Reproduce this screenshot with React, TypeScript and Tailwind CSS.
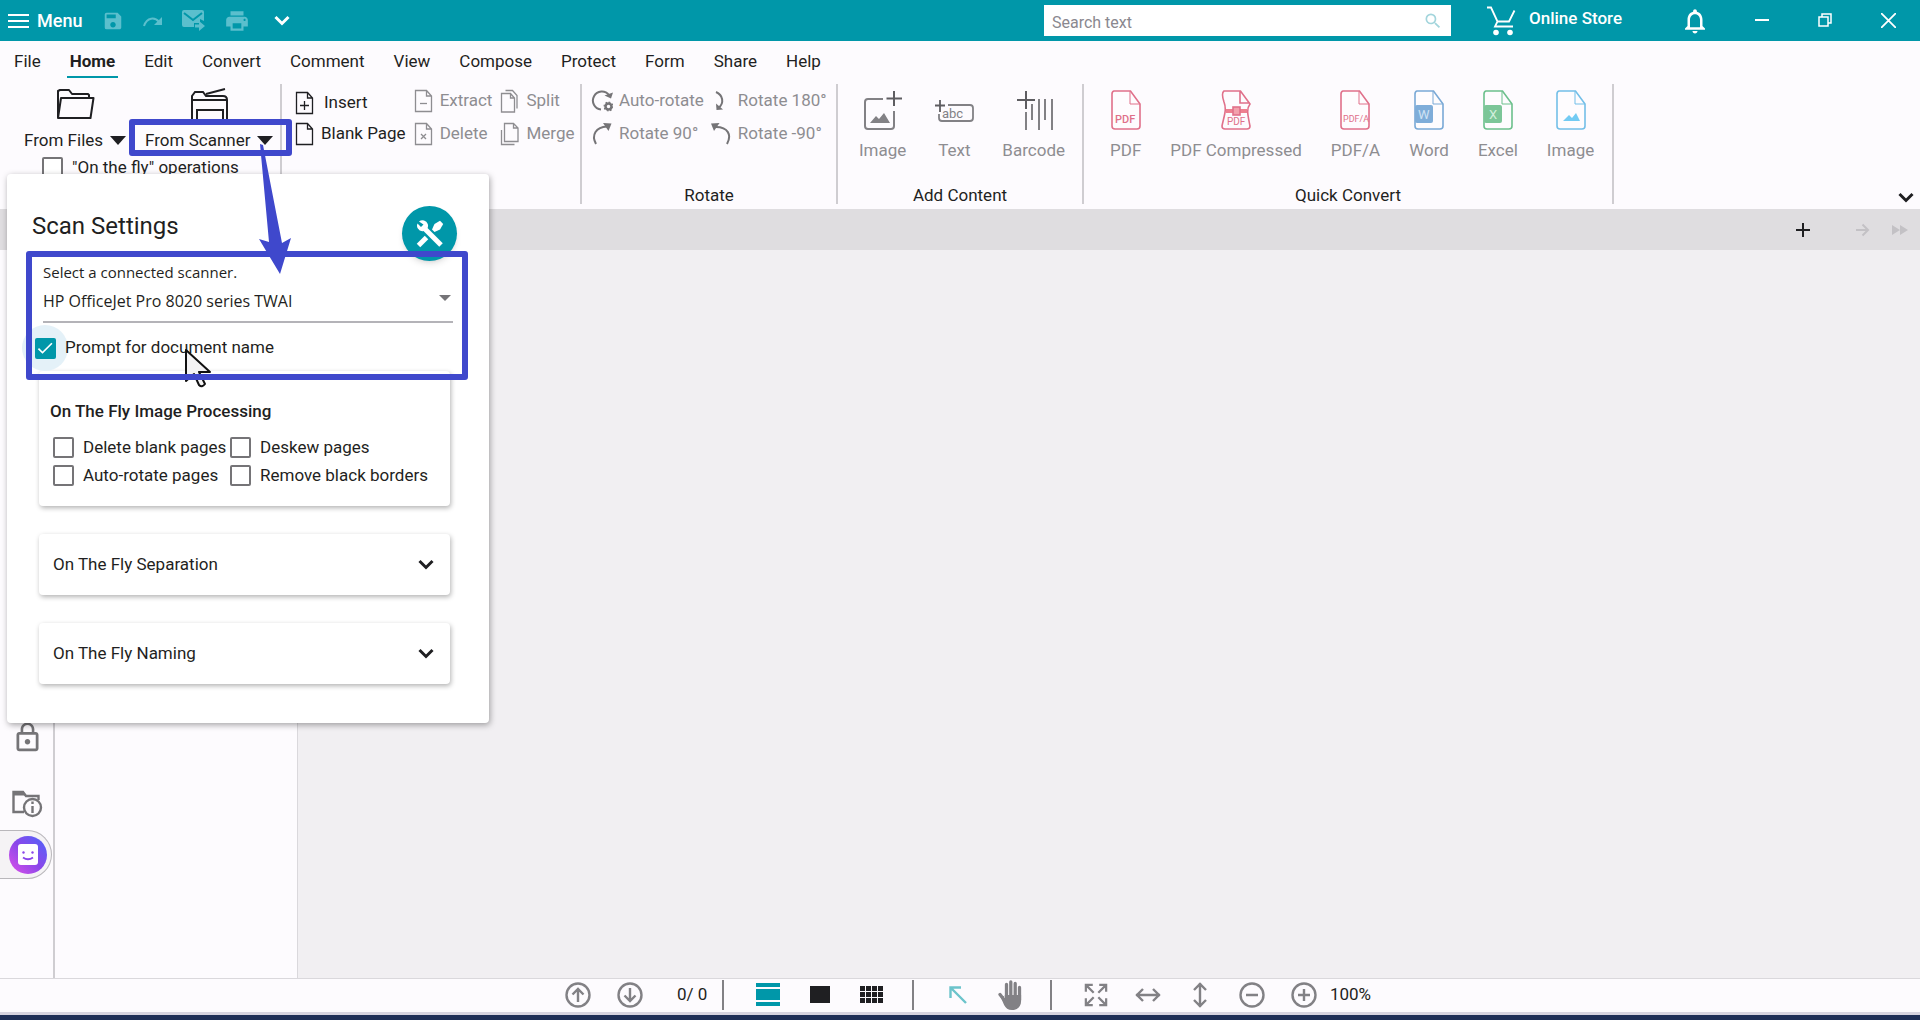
import type { ReactNode } from "react"
import { MdCheck, MdLockOutline, MdNotificationsNone, MdPrint, MdSave, MdSearch } from "react-icons/md"

const menuTabs = ["File", "Home", "Edit", "Convert", "Comment", "View", "Compose", "Protect", "Form", "Share", "Help"]

function Caret() {
  return (
    <svg width="16" height="9" viewBox="0 0 16 9" fill="#1f1f22">
      <path d="M0 0h16L8 9z" />
    </svg>
  )
}

function Chevron() {
  return (
    <svg width="16" height="11" viewBox="0 0 16 11" fill="none" stroke="currentColor" strokeWidth="3">
      <path d="M1.5 2 8 8.500 14.500 2" />
    </svg>
  )
}

function PageIcon({ kind }: { kind: "insert" | "blank" | "extract" | "delete" | "split" | "merge" }) {
  return (
    <svg width="20" height="24" viewBox="0 0 20 24" fill="none" stroke="currentColor" strokeWidth="1.3">
      {kind === "split" ? (
        <path d="M1.500 4.500h9l4 4.500v14h-13zM10.500 4.500v4.500h4M5.500 1.500h7l4.500 5v13" />
      ) : kind === "merge" ? (
        <path d="M4.500 1.500h9l4.500 4.500v13.500h-13.500zM13.500 1.500v4.500h4.500M1.500 8v14.500h13" />
      ) : (
        <path d="M1.500 1.500h11l5 5.500v15.500h-16zM12.500 1.500v5.500h5" />
      )}
      {kind === "insert" && <path d="M9.500 10v9M5 14.500h9" />}
      {kind === "extract" && <path d="M6 14.500h7" />}
      {kind === "delete" && <path d="m7 12 5 5m0-5-5 5" />}
    </svg>
  )
}

function RotateIcon({ kind }: { kind: "auto" | "cw" | "half" | "ccw" }) {
  return (
    <svg width="22" height="24" viewBox="0 0 22 24" fill="none" stroke="#757477" strokeWidth="2">
      {kind === "auto" && (
        <>
          <path d="M10 20.500A9 9 0 1 1 18 6" />
          <path d="M13.500 6.500 20 9.500l2-6z" fill="#757477" stroke="none" />
          <circle cx="17.500" cy="17.500" r="3" strokeWidth="2.500" />
          <circle cx="17.500" cy="17.500" r="4.400" strokeWidth="1.200" strokeDasharray="1.700 1.700" />
        </>
      )}
      {kind === "cw" && (
        <>
          <path d="M5 22C0 13 5 5 16 4.500" />
          <path d="m12 1 8.500.500L17.500 9z" fill="#757477" stroke="none" />
        </>
      )}
      {kind === "half" && (
        <>
          <path d="M6 3c7 3 8.500 11 2.500 16" />
          <path d="m6 14.500.5 6.500 6.500-.5z" fill="#757477" stroke="none" />
        </>
      )}
      {kind === "ccw" && (
        <>
          <path d="M17 22C22 13 18 5 6 5" />
          <path d="M9.500 1 1 1.500 4 9z" fill="#757477" stroke="none" />
        </>
      )}
    </svg>
  )
}

function RibbonItem({ icon, label, active = false, className = "gap-[6px]" }: { icon: ReactNode; label: string; active?: boolean; className?: string }) {
  return (
    <button className={`flex h-6 items-center whitespace-nowrap ${className} ${active ? "text-[#1f1f22]" : "text-[#8e8d91]"}`}>
      {icon}
      {label}
    </button>
  )
}

function RibbonGroup({ title, className, children }: { title?: string; className: string; children: ReactNode }) {
  return (
    <section className={`flex h-[120px] flex-none flex-col justify-between border-r-2 border-[#cfcdd1] ${className}`}>
      {children}
      {title && <h2 className="text-center leading-[18px] text-[#1f1f22]">{title}</h2>}
    </section>
  )
}

function TallItem({ label, children }: { label: string; children: ReactNode }) {
  return (
    <button className="flex flex-col items-center gap-[10px] whitespace-nowrap leading-5 text-[#8e8d91]">
      {children}
      {label}
    </button>
  )
}

function FileIcon({ color, children }: { color: string; children: ReactNode }) {
  return (
    <svg width="30" height="40" viewBox="0 0 30 40" fill="none" stroke={color} strokeWidth="1.600">
      <path d="M3 1h16.500L29 14v22a3 3 0 0 1-3 3H4a3 3 0 0 1-3-3V4a3 3 0 0 1 2-3z" fill="#fefcfe" />
      <path d="M19 1v13h10" strokeWidth="1" />
      {children}
    </svg>
  )
}

function Check({ id, label }: { id: string; label: string }) {
  return (
    <div className="flex items-center gap-[9px] whitespace-nowrap">
      <input
        id={id}
        type="checkbox"
        className="size-[21px] flex-none appearance-none rounded-[2px] border-2 border-[#757477] bg-white checked:border-[#0097a9] checked:bg-[#0097a9]"
      />
      <label htmlFor={id}>{label}</label>
    </div>
  )
}

function TitleBar() {
  return (
    <header className="flex h-[41px] flex-none items-center bg-[#0097a9] pl-2 text-white">
      <button className="flex items-center gap-2 text-lg font-medium">
        <svg width="21" height="16" viewBox="0 0 21 16" fill="none" stroke="currentColor" strokeWidth="2">
          <path d="M0 2h21M0 8h21M0 14h21" />
        </svg>
        Menu
      </button>
      <div className="ml-5 flex items-center gap-[19px] text-[#5bbfcd]">
        <button aria-label="Save">
          <MdSave size={22} />
        </button>
        <button aria-label="Redo">
          <svg width="20" height="12" viewBox="0 0 20 12" fill="none" stroke="currentColor" strokeWidth="2">
            <path d="M1 11c3-9 11-9 15-4" />
            <path d="M19 2v8h-8z" fill="currentColor" stroke="none" />
          </svg>
        </button>
        <button aria-label="Send by mail">
          <svg width="23" height="21" viewBox="0 0 23 21" fill="currentColor">
            <path d="M2 0h18a2 2 0 0 1 2 2v9l-4-2v4h-6v4H2a2 2 0 0 1-2-2V2a2 2 0 0 1 2-2z" />
            <path d="M13 14.500h4v-3.500l6 5-6 5v-3.500h-4z" />
            <path d="m2 3 9 7 9-7" fill="none" stroke="#0097a9" strokeWidth="2" />
          </svg>
        </button>
        <button aria-label="Print">
          <MdPrint size={26} />
        </button>
      </div>
      <button aria-label="More commands" className="ml-6">
        <Chevron />
      </button>
      <div className="ml-auto flex h-[31px] w-[407px] items-center bg-white px-2">
        <input
          type="text"
          aria-label="Search text"
          placeholder="Search text"
          className="min-w-0 flex-1 pt-1 text-base text-[#1f1f22] outline-none placeholder:text-[#8a888f]"
        />
        <MdSearch size={20} className="text-[#a3d5dc]" />
      </div>
      <a href="#store" className="ml-9 flex items-center gap-[13px] text-[17px] font-medium">
        <svg width="29" height="30" viewBox="0 0 29 30" fill="none" stroke="currentColor" strokeWidth="1.800">
          <path d="M0 1.500h4l6.500 14L8 20.500h18M10 15.500h12l5.500-11" />
          <circle cx="9" cy="26.500" r="2.800" fill="currentColor" stroke="none" />
          <circle cx="23" cy="26.500" r="2.800" fill="currentColor" stroke="none" />
        </svg>
        <span className="pb-1">Online Store</span>
      </a>
      <button aria-label="Notifications" className="ml-[58px]">
        <MdNotificationsNone size={30} />
      </button>
      <div className="ml-[33px] flex">
        <button aria-label="Minimize" className="flex w-[63px] pl-3">
          <svg width="14" height="14" stroke="currentColor" strokeWidth="2">
            <path d="M0 7h14" />
          </svg>
        </button>
        <button aria-label="Restore" className="flex w-[63px] pl-3">
          <svg width="14" height="14" fill="none" stroke="currentColor" strokeWidth="1.500">
            <path d="M1 4h9v9H1zM4 4V1h9v9h-3" />
          </svg>
        </button>
        <button aria-label="Close" className="flex w-[51px] pl-3">
          <svg width="15" height="15" stroke="currentColor" strokeWidth="1.800">
            <path d="m0 0 15 15M15 0 0 15" />
          </svg>
        </button>
      </div>
    </header>
  )
}

function MenuTabs() {
  return (
    <nav className="flex flex-none gap-[23px] px-[11px] pt-[6px]">
      {menuTabs.map((tab) => (
        <a
          key={tab}
          href={`#${tab.toLowerCase()}`}
          className={`border-b-2 px-[3px] pt-1 pb-[5px] leading-5 ${tab === "Home" ? "border-[#0097a9] font-bold" : "border-transparent"}`}
        >
          {tab}
        </a>
      ))}
    </nav>
  )
}

function Ribbon() {
  return (
    <div className="flex flex-none pt-[6px] pb-[5px]">
      <RibbonGroup className="w-[282px]">
        <div className="pt-1 pl-6">
          <div className="flex gap-[19px]">
            <button className="flex flex-col items-center gap-2 leading-6">
              <svg width="39" height="32" viewBox="0 0 39 32" fill="none" stroke="#1f1f22" strokeWidth="2" strokeLinejoin="round">
                <path d="M2 30V3l2-1h9l3 4h16l1 1v3" />
                <path d="M5 10h32.500l-3 20H2z" />
              </svg>
              <span className="flex items-center gap-[7px]">
                From Files <Caret />
              </span>
            </button>
            <button className="flex flex-col items-center gap-2 leading-6">
              <svg width="39" height="32" viewBox="0 0 39 32" fill="none" stroke="#1f1f22" strokeWidth="2">
                <path d="M2 32V8l3-4h8l3 4h17c3 0 4 2 4 4v20M2 12h35M7 32V22h26v10M16 6 35 1" />
              </svg>
              <span className="flex items-center gap-[7px]">
                From Scanner <Caret />
              </span>
            </button>
          </div>
          <div className="pt-[3px] pl-[18px] leading-6">
            <Check id="fly" label={'"On the fly" operations'} />
          </div>
        </div>
      </RibbonGroup>
      <RibbonGroup className="w-[300px]">
        <div className="flex items-end gap-2 pt-[5px] pl-[13px]">
          <div className="grid gap-[7px]">
            <RibbonItem active className="gap-[9px]" icon={<PageIcon kind="insert" />} label="Insert" />
            <RibbonItem active icon={<PageIcon kind="blank" />} label="Blank Page" />
          </div>
          <div className="grid gap-[9px]">
            <RibbonItem icon={<PageIcon kind="extract" />} label="Extract" />
            <RibbonItem icon={<PageIcon kind="delete" />} label="Delete" />
          </div>
          <div className="grid gap-[9px]">
            <RibbonItem icon={<PageIcon kind="split" />} label="Split" />
            <RibbonItem icon={<PageIcon kind="merge" />} label="Merge" />
          </div>
        </div>
      </RibbonGroup>
      <RibbonGroup title="Rotate" className="w-[256px]">
        <div className="flex gap-[6px] pt-[5px] pl-[9px]">
          <div className="grid gap-[9px]">
            <RibbonItem icon={<RotateIcon kind="auto" />} label="Auto-rotate" />
            <RibbonItem icon={<RotateIcon kind="cw" />} label="Rotate 90°" />
          </div>
          <div className="grid gap-[9px]">
            <RibbonItem icon={<RotateIcon kind="half" />} label="Rotate 180°" />
            <RibbonItem icon={<RotateIcon kind="ccw" />} label="Rotate -90°" />
          </div>
        </div>
      </RibbonGroup>
      <RibbonGroup title="Add Content" className="w-[246px]">
        <div className="flex gap-7 pt-[6px] pl-[21px]">
          <TallItem label="Image">
            <svg width="40" height="40" viewBox="0 0 40 40" fill="none" stroke="#828185" strokeWidth="2">
              <path d="M20 9H5a3 3 0 0 0-3 3v24a3 3 0 0 0 3 3h23a3 3 0 0 0 3-3V21" />
              <path d="M31 1v15M23.500 8.500H39" stroke="#5e5d61" />
              <path d="m7 33 6-7 3 3 5-6 6 10z" fill="#828185" stroke="none" />
            </svg>
          </TallItem>
          <TallItem label="Text">
            <svg width="40" height="40" viewBox="0 0 40 40" fill="none" stroke="#828185" strokeWidth="1.800">
              <path d="M14 15h22a3 3 0 0 1 3 3v10a3 3 0 0 1-3 3H8a3 3 0 0 1-3-3v-4" />
              <path d="M6 10v12M1 15.500h10" stroke="#5e5d61" />
              <text x="8" y="28" fill="#828185" stroke="none" fontSize="13">
                abc
              </text>
            </svg>
          </TallItem>
          <TallItem label="Barcode">
            <svg width="40" height="40" viewBox="0 0 40 40" fill="none" stroke="#828185" strokeWidth="2">
              <path d="M12 22v18M18 14v16M25 9v31M31 9v21M38 9v31" />
              <path d="M12 1v18M3 10h18" stroke="#5e5d61" />
            </svg>
          </TallItem>
        </div>
      </RibbonGroup>
      <RibbonGroup title="Quick Convert" className="w-[530px]">
        <div className="flex gap-[29px] pt-[6px] pl-[26px]">
          <TallItem label="PDF">
            <FileIcon color="#e0708a">
              <text x="4" y="33" fill="#e0708a" stroke="none" fontSize="11" fontWeight="500">
                PDF
              </text>
            </FileIcon>
          </TallItem>
          <TallItem label="PDF Compressed">
            <svg width="30" height="40" viewBox="0 0 30 40" fill="none" stroke="#e0708a" strokeWidth="1.600">
              <path d="M3 1h16.500L29 14c-4 5-2 12 0 22 0 2-1 3-3 3H4c-2 0-3-1-3-3 2-10 5-16 2-24C2 9 0 3 3 1zM19 1v12h10" />
              <path d="M5 21h21" stroke="#ee8090" strokeWidth="4" />
              <rect x="12" y="17" width="7" height="8" fill="#f2a0ac" />
              <text x="6" y="35" fill="#e0708a" stroke="none" fontSize="10">
                PDF
              </text>
            </svg>
          </TallItem>
          <TallItem label="PDF/A">
            <FileIcon color="#e0708a">
              <text x="3" y="32" fill="#e0708a" stroke="none" fontSize="9">
                PDF/A
              </text>
            </FileIcon>
          </TallItem>
          <TallItem label="Word">
            <FileIcon color="#7aa9d6">
              <rect x="1" y="15" width="18" height="18" rx="2" fill="#7fadd9" stroke="none" />
              <text x="4" y="29" fill="#cfe2f4" stroke="none" fontSize="13">
                W
              </text>
            </FileIcon>
          </TallItem>
          <TallItem label="Excel">
            <FileIcon color="#6cc08c">
              <rect x="1" y="15" width="18" height="18" rx="2" fill="#7cc698" stroke="none" />
              <text x="6" y="29" fill="#d3f0dd" stroke="none" fontSize="13">
                X
              </text>
            </FileIcon>
          </TallItem>
          <TallItem label="Image">
            <FileIcon color="#73bfe8">
              <path d="m7 31 6-6 3 3 4-5 4 8z" fill="#73cbf3" stroke="none" />
            </FileIcon>
          </TallItem>
        </div>
      </RibbonGroup>
      <button aria-label="Collapse ribbon" className="mt-auto mr-[6px] mb-px ml-auto">
        <Chevron />
      </button>
    </div>
  )
}

function DocumentTabs() {
  return (
    <div className="flex h-[41px] flex-none items-center justify-end bg-[#dfdde0] pr-3 text-[#c3c1c5]">
      <button aria-label="New tab">
        <svg width="14" height="14" stroke="#1f1f22" strokeWidth="2">
          <path d="M7 0v14M0 7h14" />
        </svg>
      </button>
      <button aria-label="Next tab" className="ml-[46px]">
        <svg width="14" height="14" fill="none" stroke="currentColor" strokeWidth="2">
          <path d="M0 7h12M6.500 1.500 12 7l-5.500 5.500" />
        </svg>
      </button>
      <button aria-label="Last tab" className="ml-[22px]">
        <svg width="16" height="12" fill="currentColor">
          <path d="m0 1 8 5-8 5zM8 1l8 5-8 5z" />
        </svg>
      </button>
    </div>
  )
}

function SideBar() {
  return (
    <aside className="flex w-[55px] flex-none flex-col justify-end border-r-2 border-[#cfcdd1] pb-[99px] text-[#757477]">
      <button aria-label="Security" className="mb-9 ml-[11px] self-start">
        <MdLockOutline size={33} />
      </button>
      <button aria-label="Document info" className="mb-3 ml-3 self-start">
        <svg width="31" height="28" viewBox="0 0 31 28" fill="none" stroke="currentColor" strokeWidth="2.400">
          <path d="M12 22H1.500V2H11l3 4h12.500v4" />
          <path d="M1.500 1.500H11l2.500 4h-12z" fill="currentColor" stroke="none" />
          <circle cx="20.500" cy="17.500" r="8.500" />
          <path d="M20.500 16v7M20.500 11.500v2.500" />
        </svg>
      </button>
      <button aria-label="Assistant" className="flex h-[49px] w-[52px] items-center rounded-r-full border border-l-0 border-[#b9b7bb] bg-[#f5f3f5] pl-[9px]">
        <span className="flex size-[38px] items-center justify-center rounded-full bg-linear-to-tr from-[#e04be8] via-[#8a46ea] to-[#4063fa]">
          <svg width="20" height="21" viewBox="0 0 20 21">
            <rect width="20" height="21" rx="3" fill="#fff" />
            <path d="M5 13.500q5 3.500 10 0" fill="none" stroke="#8a46ea" strokeWidth="1.800" />
            <circle cx="5.500" cy="8.500" r="1.200" fill="#8a46ea" />
            <circle cx="14.500" cy="8.500" r="1.200" fill="#8a46ea" />
          </svg>
        </span>
      </button>
    </aside>
  )
}

function ToolButton({ label, children }: { label: string; children: ReactNode }) {
  return (
    <button aria-label={label} className="flex w-[52px] justify-center">
      {children}
    </button>
  )
}

function StatusIcon({ d, size = 26 }: { d: string; size?: number }) {
  return (
    <svg width={size} height={size} viewBox="0 0 26 26" fill="none" stroke="currentColor" strokeWidth="2.400">
      <path d={d} />
    </svg>
  )
}

const ring = "M13 1.500a11.500 11.500 0 1 0 0 23a11.500 11.500 0 1 0 0-23z"

function StatusBar() {
  return (
    <footer className="flex-none border-t border-[#dad8dc]">
      <div className="flex h-[33px] items-center justify-center pb-[2px] pl-[3px] text-[#828185]">
        <ToolButton label="Previous page">
          <StatusIcon d={`${ring}M13 20V7M7.500 12.500 13 7l5.500 5.500`} />
        </ToolButton>
        <ToolButton label="Next page">
          <StatusIcon d={`${ring}M13 6v13M7.500 13.500 13 19l5.500-5.500`} />
        </ToolButton>
        <span className="w-[66px] pl-[21px] text-[17px] text-[#1f1f22]">0/ 0</span>
        <span className="mr-[18px] h-[30px] w-[2px] bg-[#828185]" />
        <ToolButton label="Continuous view">
          <svg width="24" height="23" fill="#0097a9">
            <path d="M0 0h24v4H0zM0 6h24v11H0zM0 19h24v4H0z" />
          </svg>
        </ToolButton>
        <ToolButton label="Single page view">
          <svg width="20" height="17" fill="#1f1f22">
            <path d="M0 0h20v17H0z" />
          </svg>
        </ToolButton>
        <ToolButton label="Thumbnail view">
          <svg width="24" height="18" fill="#1f1f22">
            <path d="M0 0h5v5H0zM6 0h5v5H6zM12 0h5v5h-5zM18 0h5v5h-5zM0 6h5v5H0zM6 6h5v5H6zM12 6h5v5h-5zM18 6h5v5h-5zM0 12h5v5H0zM6 12h5v5H6zM12 12h5v5h-5zM18 12h5v5h-5z" />
          </svg>
        </ToolButton>
        <span className="mr-[18px] ml-[14px] h-[30px] w-[2px] bg-[#828185]" />
        <ToolButton label="Select tool">
          <svg width="18" height="18" fill="none" stroke="#6cc4cb" strokeWidth="2.400">
            <path d="M1.500 12V1.500H12M1.500 1.500 17 17" />
          </svg>
        </ToolButton>
        <ToolButton label="Hand tool">
          <svg width="24" height="30" viewBox="0 0 24 30" fill="none" stroke="currentColor" strokeWidth="3.300" strokeLinecap="round">
            <path d="M8.500 4.500V17M12.800 2v15M17.200 3.500V17M21.500 7.500V20M2 14.500l5 6.500" />
            <path
              d="M6.800 15h16.300v6c0 5-3 9-9 9-4 0-6.500-2-8-5l-3.500-8 3-1 1.200 2z"
              fill="currentColor"
              stroke="none"
            />
          </svg>
        </ToolButton>
        <span className="mr-[18px] ml-[14px] h-[30px] w-[2px] bg-[#828185]" />
        <ToolButton label="Full screen">
          <StatusIcon d="M2 9.500V2h7.500M2 2l8.500 8.500M16.500 2H24v7.500M24 2l-8.500 8.500M2 16.500V24h7.500M2 24l8.500-8.500M16.500 24H24v-7.500M24 24l-8.500-8.500" size={24} />
        </ToolButton>
        <ToolButton label="Fit width">
          <StatusIcon d="M1 13h24M8 7l-6 6 6 6M18 7l6 6-6 6" />
        </ToolButton>
        <ToolButton label="Fit height">
          <StatusIcon d="M13 1v24M7 8l6-6 6 6M7 18l6 6 6-6" />
        </ToolButton>
        <ToolButton label="Zoom out">
          <StatusIcon d={`${ring}M7 13h12`} />
        </ToolButton>
        <ToolButton label="Zoom in">
          <StatusIcon d={`${ring}M7 13h12M13 7v12`} />
        </ToolButton>
        <span className="text-[17px] text-[#1f1f22]">100%</span>
      </div>
      <div className="h-[3px] bg-[#d7d4e0]" />
      <div className="h-[5px] bg-[#1f2f57]" />
    </footer>
  )
}

function ScanSettings() {
  return (
    <div className="absolute top-[174px] left-[7px] w-[482px] rounded-[4px] bg-white pb-[39px] shadow-[1px_2px_6px_rgba(0,0,0,0.35)]">
      <div className="flex items-start justify-between pt-8 pr-8 pl-[25px]">
        <h1 className="pt-1 text-2xl leading-8">Scan Settings</h1>
        <button aria-label="Scanner tools" className="flex size-[55px] items-center justify-center rounded-full bg-[#0097a9] shadow-md">
          <svg width="28" height="28" viewBox="0 0 28 28" fill="none" stroke="#fff">
            <path d="M8 8 25 25" strokeWidth="5" />
            <path d="M3 1.500A5.500 5.500 0 1 1 1.500 3.500L5 7l2.500-2.500z" fill="#fff" stroke="none" />
            <path d="m2.500 25.500 8-8" strokeWidth="5" />
            <path d="M16 9.500 18.500 4 24 .8 27.200 4 24 9.500 18.500 12z" fill="#fff" stroke="none" />
          </svg>
        </button>
      </div>
      <div className="-mt-px px-9 font-['Open_Sans','Noto_Sans',sans-serif]">
        <label htmlFor="scanner" className="block text-[15px] leading-6">
          Select a connected scanner.
        </label>
        <div className="relative mt-1 border-b-2 border-[#b4b3b8]">
          <select id="scanner" className="block h-[33px] w-full appearance-none pb-2 text-base outline-none">
            <option>HP OfficeJet Pro 8020 series TWAI</option>
          </select>
          <svg width="12" height="6" fill="#757477" className="pointer-events-none absolute top-[7px] right-[2px]">
            <path d="M0 0h12L6 6z" />
          </svg>
        </div>
      </div>
      <div className="mt-[2px] ml-[15px] flex items-center">
        <span className="relative flex size-[46px] items-center justify-center rounded-full bg-[#e4f1f8]">
          <input
            id="prompt"
            type="checkbox"
            defaultChecked
            className="size-[21px] appearance-none rounded-[2px] bg-[#0097a9]"
          />
          <MdCheck size={20} className="pointer-events-none absolute text-white" />
        </span>
        <label htmlFor="prompt" className="relative -ml-[3px]">
          Prompt for document name
        </label>
      </div>
      <div className="mr-[39px] ml-8 grid gap-7">
        <section className="rounded-[4px] px-[11px] pt-7 pb-[19px] shadow-[1px_2px_5px_rgba(0,0,0,0.3)]">
          <h2 className="leading-6 font-medium">On The Fly Image Processing</h2>
          <div className="grid grid-cols-[177px_1fr] gap-y-1 pt-3 pl-[3px] leading-6">
            <Check id="blank" label="Delete blank pages" />
            <Check id="deskew" label="Deskew pages" />
            <Check id="rotate" label="Auto-rotate pages" />
            <Check id="borders" label="Remove black borders" />
          </div>
        </section>
        {["On The Fly Separation", "On The Fly Naming"].map((title) => (
          <button
            key={title}
            className="flex h-[61px] items-center justify-between rounded-[4px] pr-4 pl-[14px] shadow-[1px_2px_5px_rgba(0,0,0,0.3)]"
          >
            {title}
            <Chevron />
          </button>
        ))}
      </div>
    </div>
  )
}

function Annotations() {
  return (
    <div className="pointer-events-none absolute top-0 left-0">
      <div className="absolute top-[119px] left-[129px] h-[37px] w-[163px] rounded-[3px] border-6 border-[#3f48cc]" />
      <svg width="28" height="42" viewBox="0 0 28 42" fill="#f4f3f4" stroke="#111" strokeWidth="2" className="absolute top-[348px] left-[184px]">
        <path d="M2 2v31l8-7 5 11q3 3 6-1l-6-12h11z" strokeLinejoin="round" />
      </svg>
      <div className="absolute top-[251px] left-[26px] h-[129px] w-[442px] rounded-[3px] border-6 border-[#3f48cc]" />
      <svg width="36" height="132" viewBox="0 0 36 132" fill="#3f48cc" className="absolute top-[143px] left-[257px]">
        <path d="m3 1 3 1 19 98 9-5-11 36-21-35 10 3z" />
      </svg>
    </div>
  )
}

export default function App() {
  return (
    <div className="relative flex min-h-screen flex-col bg-[#fdfbfe] font-[Roboto,sans-serif] text-[17px] text-[#1f1f22]">
      <TitleBar />
      <MenuTabs />
      <Ribbon />
      <DocumentTabs />
      <main className="flex flex-1">
        <SideBar />
        <div className="w-[243px] flex-none border-r border-[#dad8dc]" />
        <div className="flex-1 bg-[#f1eff2]" />
      </main>
      <StatusBar />
      <ScanSettings />
      <Annotations />
    </div>
  )
}
